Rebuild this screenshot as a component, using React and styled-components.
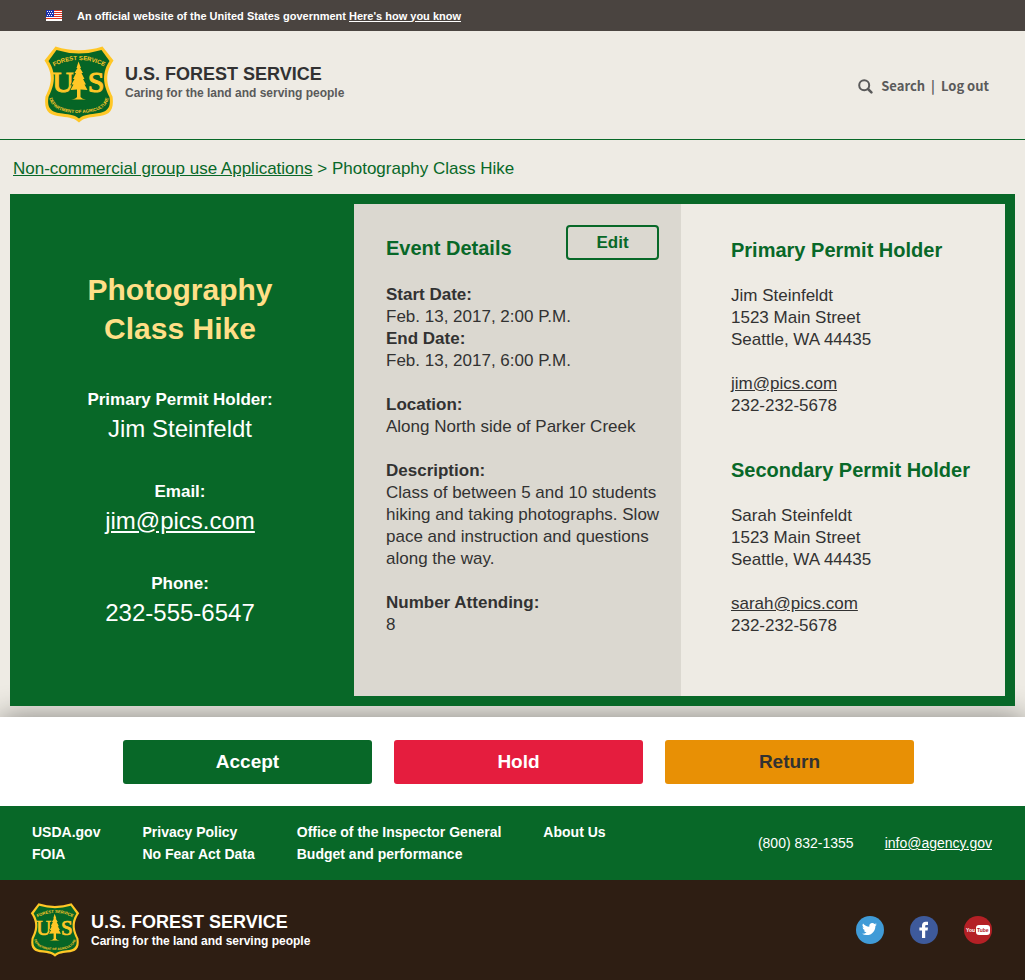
import React from 'react';
import styled, { createGlobalStyle } from 'styled-components';

const green = '#086828';
const cream = '#eeebe4';
const ink = '#323232';

const GlobalStyle = createGlobalStyle`
  * { box-sizing: border-box; }
  body {
    margin: 0;
    background: ${cream};
    color: ${ink};
    font-family: "Liberation Sans", Arial, sans-serif;
    font-size: 17px;
    line-height: 22px;
  }
  h1, h2, p, dl, dd, ul { margin: 0; padding: 0; }
  a { color: inherit; }
`;

const Banner = styled.div`
  display: flex;
  align-items: center;
  gap: 15px;
  height: 31px;
  padding: 0 46px;
  background: #4a4440;
  color: #fff;
  font-size: 11px;
  font-weight: bold;
`;

const Header = styled.header`
  display: flex;
  align-items: center;
  justify-content: space-between;
  height: 109px;
  padding: 0 36px 2px 44px;
  border-bottom: 1px solid ${green};
`;

const BrandLink = styled.div`
  display: flex;
  align-items: center;
  gap: 11px;
  color: ${(p) => (p.$light ? '#fff' : ink)};
`;

const BrandText = styled.div`
  padding: ${(p) => (p.$light ? '2px 0 0' : '0 0 2px')};
`;

const BrandName = styled.p`
  font-size: 18px;
  font-weight: bold;
  line-height: 20px;
`;

const Tagline = styled.p`
  font-size: 12px;
  font-weight: bold;
  line-height: 18px;
  color: ${(p) => (p.$light ? '#fff' : '#5a5a5a')};
`;

const UserNav = styled.nav`
  display: flex;
  align-items: center;
  gap: 6px;
  padding-top: 4px;
  font-family: "Noto Sans CJK JP", "Open Sans", sans-serif;
  font-size: 13px;
  font-weight: bold;
  color: #5a5a5a;

  a { text-decoration: none; display: flex; align-items: center; gap: 8px; }
`;

const Breadcrumb = styled.nav`
  padding: 18px 13px 14px;
  color: ${green};
`;

const Card = styled.main`
  position: relative;
  z-index: 1;
  display: grid;
  grid-template-columns: 334fr 327fr 324fr;
  min-height: 512px;
  margin: 0 10px 11px;
  border: 10px solid ${green};
`;

const Summary = styled.section`
  display: flex;
  flex-direction: column;
  justify-content: center;
  padding: 0 14px 0 0;
  background: ${green};
  color: #fff;
  text-align: center;
`;

const Title = styled.h1`
  width: 200px;
  margin: 0 auto 41px;
  font-size: 30px;
  line-height: 39px;
  color: #ffdf87;
`;

const Facts = styled.dl`
  display: grid;
  gap: 34px;

  dt { font-weight: bold; }
  dd { font-size: 24px; line-height: 36px; }
`;

const Details = styled.section`
  padding: 21px 16px 32px 32px;
  background: #dbd8d0;
`;

const DetailsHead = styled.div`
  display: flex;
  justify-content: space-between;
  align-items: flex-end;
  margin: 0 6px 24px 0;
`;

const Heading = styled.h2`
  font-size: 20px;
  line-height: 24px;
  color: ${green};
`;

const EditButton = styled.button`
  width: 93px;
  height: 35px;
  border: 2px solid ${green};
  border-radius: 4px;
  background: transparent;
  color: ${green};
  font: bold 17px "Liberation Sans", Arial, sans-serif;
`;

const DetailList = styled.dl`
  dt { font-weight: bold; }
  dd { margin-bottom: 22px; }
  dd.tight { margin-bottom: 0; }
`;

const Holders = styled.section`
  display: grid;
  align-content: start;
  gap: 41px;
  padding: 34px 10px 32px 50px;
  background: ${cream};
`;

const Contact = styled.div`
  ${Heading} { margin-bottom: 23px; }
  p + p { margin-top: 22px; }
`;

const Line = styled.span`
  display: block;
`;

const Actions = styled.div`
  display: flex;
  gap: 22px;
  padding: 23px 111px 22px 123px;
  background: #fff;
  box-shadow: 0 0 30px rgba(0, 0, 0, 0.45);
`;

const ActionButton = styled.button`
  flex: 1;
  height: 44px;
  border: 0;
  border-radius: 3px;
  background: ${(p) => p.$fill};
  color: ${(p) => p.$text || '#fff'};
  font: bold 19px "Liberation Sans", Arial, sans-serif;
`;

const LinkBar = styled.div`
  position: relative;
  display: flex;
  justify-content: space-between;
  align-items: center;
  min-height: 74px;
  padding: 0 33px 0 32px;
  background: ${green};
  color: #fff;
  font-size: 14px;
`;

const LinkGrid = styled.nav`
  display: grid;
  grid-template-columns: repeat(4, auto);
  column-gap: 42px;
  font-weight: bold;

  a { text-decoration: none; }
`;

const ContactLinks = styled.div`
  display: flex;
  gap: 31px;
`;

const BottomBar = styled.div`
  position: relative;
  display: flex;
  justify-content: space-between;
  align-items: center;
  min-height: 100px;
  padding: 0 33px 0 30px;
  background: #2e1e13;
`;

const Social = styled.div`
  display: flex;
  gap: 26px;

  a, svg { display: block; }
`;

const Flag = () => (
  <svg width="16" height="11" viewBox="0 0 16 11" aria-hidden="true">
    <rect width="16" height="11" fill="#fff" />
    {[0, 2, 4, 6, 8].map((y) => (
      <rect key={y} y={y} width="16" height="1" fill="#e1301e" />
    ))}
    <rect width="8" height="7" fill="#1e33b1" />
    {[1, 3, 5].map((y) =>
      [1, 3, 5].map((x) => (
        <rect key={`${x}-${y}`} x={x + (y === 3 ? 1 : 0)} y={y} width="1" height="1" fill="#fff" />
      ))
    )}
  </svg>
);

const Shield = ({ width, height, id }) => (
  <svg width={width} height={height} viewBox="0 0 138 154" role="img" aria-label="Forest Service shield">
    <defs>
      <path id={`${id}-top`} d="M15 43 Q69 13 123 43" />
      <path id={`${id}-low`} d="M9 90 C6 122 30 134 69 134 C108 134 132 122 129 90" />
    </defs>
    <path
      d="M22 1 Q69 16 116 1 L138 29 C116 61 128 83 136 101 C140 132 128 139 104 141 C87 143 77 145 69 153 C61 145 51 143 34 141 C10 139 -2 132 2 101 C10 83 22 61 0 29 Z"
      fill="#ffc726"
    />
    <path
      d="M24 8 Q69 22 114 8 L130 30 C111 59 121 84 130 102 C134 127 122 133 102 135 C86 137 76 139 69 145 C62 139 52 137 36 135 C16 133 4 127 8 102 C17 84 27 59 8 30 Z"
      fill="#066526"
    />
    <g fill="#ffc726" fontFamily="Liberation Sans, Arial, sans-serif" fontWeight="bold">
      <text fontSize="12" textAnchor="middle">
        <textPath href={`#${id}-top`} startOffset="50%">FOREST SERVICE</textPath>
      </text>
      <text fontSize="9" textAnchor="middle">
        <textPath href={`#${id}-low`} startOffset="50%">DEPARTMENT OF AGRICULTURE</textPath>
      </text>
      <g fontFamily="Liberation Serif, serif" fontSize="60" textAnchor="middle" fontWeight="normal" stroke="#ffc726" strokeWidth="2">
        <text x="37" y="91">U</text>
        <text x="103" y="91">S</text>
      </g>
    </g>
    <path
      d="M68 31 L73 44 L71 44 L77 54 L74 54 L80 66 L77 66 L83 77 L80 77 L86 88 L72 87 L72 102 Q75 106 83 107 L53 107 Q62 106 65 102 L65 87 L52 88 L58 77 L54 77 L60 66 L57 66 L63 54 L60 54 L66 44 L64 44 Z"
      fill="#ffc726"
      stroke="#066526"
      strokeWidth="3"
      paintOrder="stroke"
    />
  </svg>
);

const Brand = ({ light, width, height, id }) => (
  <BrandLink $light={light}>
    <Shield width={width} height={height} id={id} />
    <BrandText $light={light}>
      <BrandName>U.S. FOREST SERVICE</BrandName>
      <Tagline $light={light}>Caring for the land and serving people</Tagline>
    </BrandText>
  </BrandLink>
);

const SearchIcon = () => (
  <svg width="15" height="15" viewBox="0 0 15 15" fill="none" stroke="#5a5a5a" aria-hidden="true">
    <circle cx="6.2" cy="6.2" r="5" strokeWidth="2" />
    <path d="M10 10 L13.4 13.4" strokeWidth="2.5" strokeLinecap="round" />
  </svg>
);

const TwitterIcon = () => (
  <svg width="28" height="28" viewBox="0 0 28 28">
    <circle cx="14" cy="14" r="14" fill="#409bd7" />
    <path
      transform="translate(6 5.6) scale(.62)"
      fill="#fff"
      d="M23.95 4.57a10 10 0 0 1-2.82.77 4.96 4.96 0 0 0 2.16-2.72c-.95.55-2 .95-3.13 1.18a4.92 4.92 0 0 0-8.38 4.48C7.69 8.1 4.07 6.13 1.64 3.16a4.92 4.92 0 0 0 1.52 6.57 4.9 4.9 0 0 1-2.23-.61v.06a4.92 4.92 0 0 0 3.95 4.83 5 5 0 0 1-2.21.08 4.94 4.94 0 0 0 4.6 3.42A9.87 9.87 0 0 1 0 19.54a14 14 0 0 0 7.55 2.21c9.05 0 14-7.5 14-13.98 0-.21 0-.42-.02-.63a9.94 9.94 0 0 0 2.46-2.55z"
    />
  </svg>
);

const FacebookIcon = () => (
  <svg width="28" height="28" viewBox="0 0 28 28">
    <circle cx="14" cy="14" r="14" fill="#3e5a9b" />
    <path fill="#fff" d="M12 22 V14.6 H9.4 V11.5 H12 V9.6 C12 7.2 13.4 5.8 15.8 5.8 H18 V8.9 H16.6 C15.5 8.9 15.2 9.4 15.2 10.3 V11.5 H18 L17.6 14.6 H15.2 V22 Z" />
  </svg>
);

const YouTubeIcon = () => (
  <svg width="28" height="28" viewBox="0 0 28 28">
    <circle cx="14" cy="14" r="14" fill="#b42025" />
    <rect x="12" y="9" width="14" height="10" rx="3" fill="#fff" />
    <g fontFamily="Liberation Sans, sans-serif" fontWeight="bold" fontSize="5">
      <text x="2" y="16" fill="#fff">You</text>
      <text x="13" y="16" fill="#b42025">Tube</text>
    </g>
  </svg>
);

const holders = [
  { role: 'Primary', name: 'Jim Steinfeldt', email: 'jim@pics.com' },
  { role: 'Secondary', name: 'Sarah Steinfeldt', email: 'sarah@pics.com' },
];

const footerLinks = [
  'USDA.gov', 'Privacy Policy', 'Office of the Inspector General', 'About Us',
  'FOIA', 'No Fear Act Data', 'Budget and performance',
];

export default function App() {
  return (
    <>
      <GlobalStyle />
      <Banner>
        <Flag />
        <p>
          An official website of the United States government <a href="#how">Here's how you know</a>
        </p>
      </Banner>
      <Header>
        <Brand width={70} height={77} id="head" />
        <UserNav>
          <a href="#search"><SearchIcon />Search</a>
          <span>|</span>
          <a href="#logout">Log out</a>
        </UserNav>
      </Header>
      <Breadcrumb>
        <a href="#applications">Non-commercial group use Applications</a> &gt; Photography Class Hike
      </Breadcrumb>
      <Card>
        <Summary>
          <Title>Photography Class Hike</Title>
          <Facts>
            <div>
              <dt>Primary Permit Holder:</dt>
              <dd>Jim Steinfeldt</dd>
            </div>
            <div>
              <dt>Email:</dt>
              <dd><a href="mailto:jim@pics.com">jim@pics.com</a></dd>
            </div>
            <div>
              <dt>Phone:</dt>
              <dd>232-555-6547</dd>
            </div>
          </Facts>
        </Summary>
        <Details>
          <DetailsHead>
            <Heading>Event Details</Heading>
            <EditButton type="button">Edit</EditButton>
          </DetailsHead>
          <DetailList>
            <dt>Start Date:</dt>
            <dd className="tight">Feb. 13, 2017, 2:00 P.M.</dd>
            <dt>End Date:</dt>
            <dd>Feb. 13, 2017, 6:00 P.M.</dd>
            <dt>Location:</dt>
            <dd>Along North side of Parker Creek</dd>
            <dt>Description:</dt>
            <dd>
              Class of between 5 and 10 students hiking and taking photographs. Slow pace and
              instruction and questions along the way.
            </dd>
            <dt>Number Attending:</dt>
            <dd className="tight">8</dd>
          </DetailList>
        </Details>
        <Holders>
          {holders.map((h) => (
            <Contact key={h.role}>
              <Heading>{h.role} Permit Holder</Heading>
              <p>
                <Line>{h.name}</Line>
                <Line>1523 Main Street</Line>
                <Line>Seattle, WA 44435</Line>
              </p>
              <p>
                <Line><a href={`mailto:${h.email}`}>{h.email}</a></Line>
                <Line>232-232-5678</Line>
              </p>
            </Contact>
          ))}
        </Holders>
      </Card>
      <Actions>
        <ActionButton type="button" $fill={green}>Accept</ActionButton>
        <ActionButton type="button" $fill="#e51d3e">Hold</ActionButton>
        <ActionButton type="button" $fill="#e89005" $text={ink}>Return</ActionButton>
      </Actions>
      <footer>
        <LinkBar>
          <LinkGrid>
            {footerLinks.map((t) => <a key={t} href="#more">{t}</a>)}
          </LinkGrid>
          <ContactLinks>
            <span>(800) 832-1355</span>
            <a href="mailto:info@agency.gov">info@agency.gov</a>
          </ContactLinks>
        </LinkBar>
        <BottomBar>
          <Brand light width={50} height={54} id="foot" />
          <Social>
            <a href="#twitter" aria-label="Twitter"><TwitterIcon /></a>
            <a href="#facebook" aria-label="Facebook"><FacebookIcon /></a>
            <a href="#youtube" aria-label="YouTube"><YouTubeIcon /></a>
          </Social>
        </BottomBar>
      </footer>
    </>
  );
}
